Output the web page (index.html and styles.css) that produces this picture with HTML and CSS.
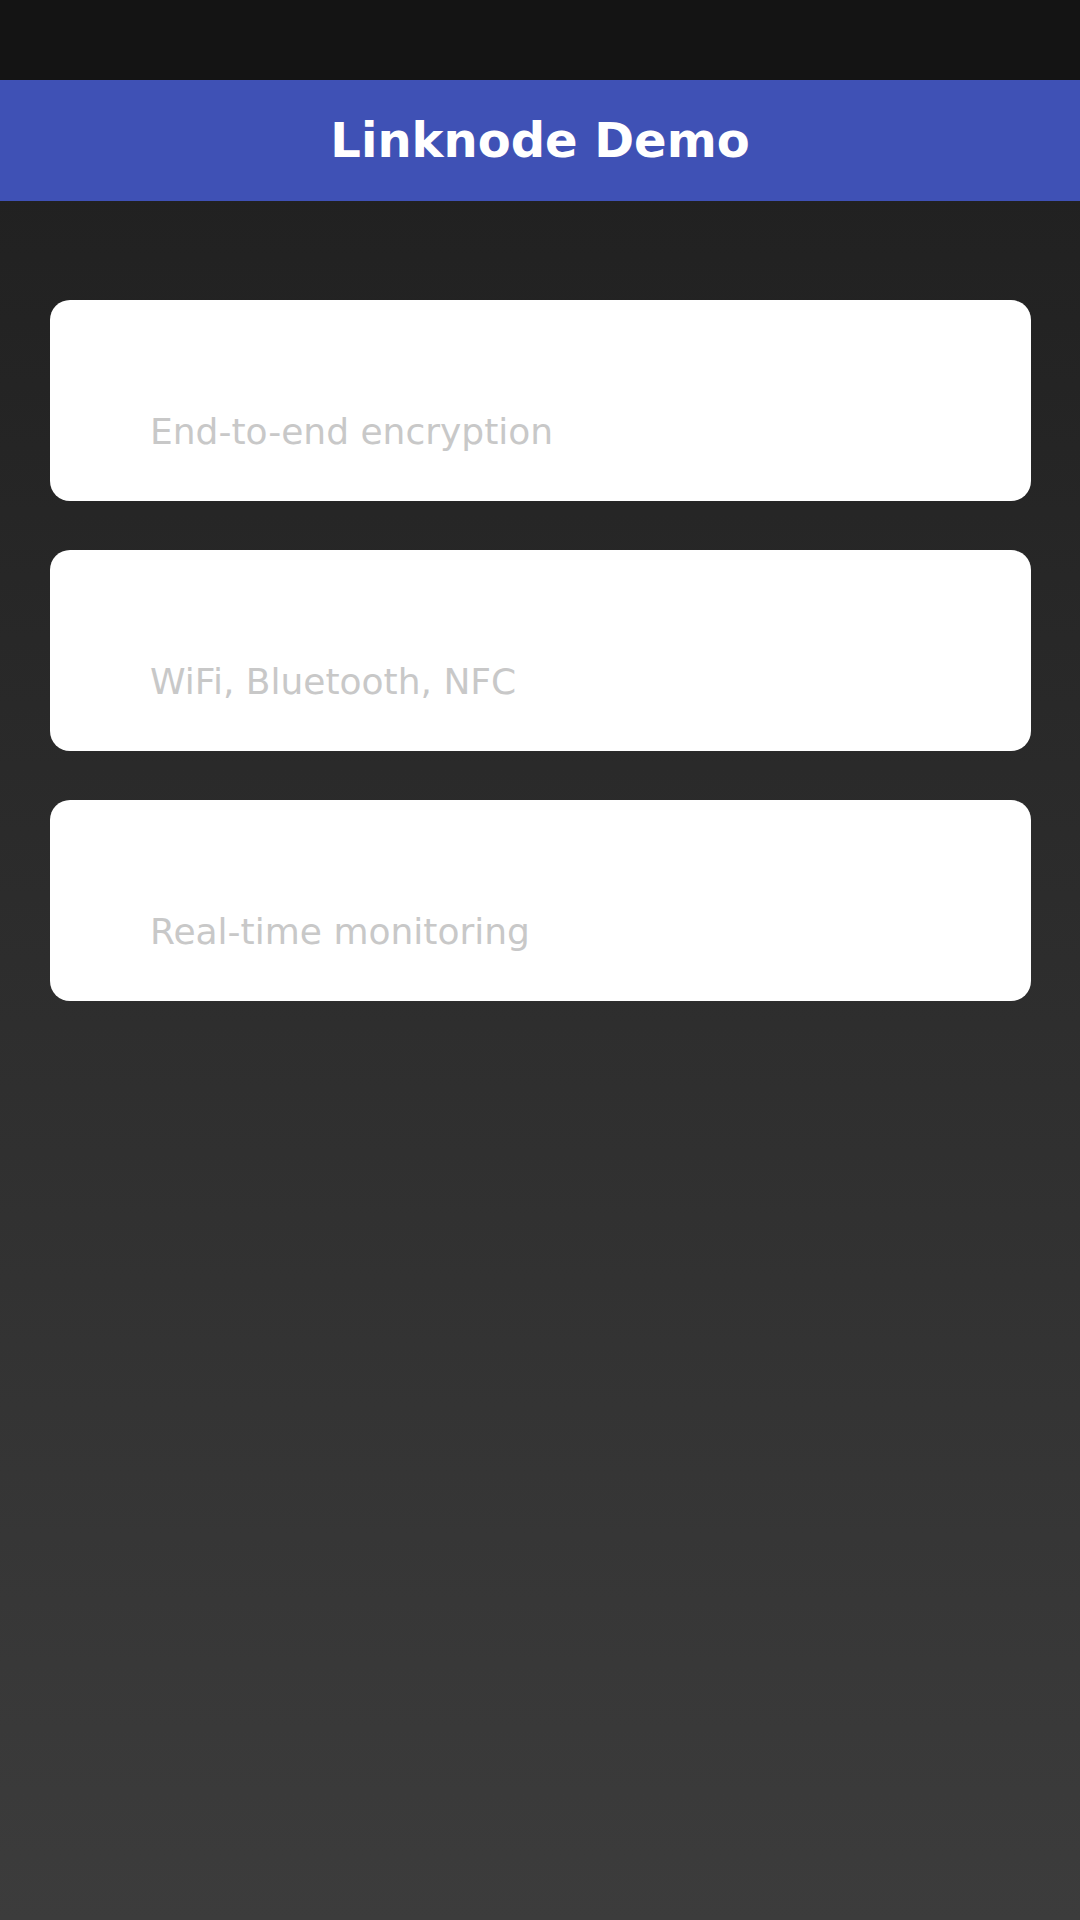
FILE: index.html
```html
<!DOCTYPE html>
<html lang="en">
<head>
<meta charset="utf-8">
<meta name="viewport" content="width=device-width, initial-scale=1">
<title>Linknode Demo</title>
<link rel="stylesheet" href="styles.css">
</head>
<body>
<div class="status-bar"></div>
<header class="app-bar"><h1 class="app-title">Linknode Demo</h1></header>
<main class="features">
<section class="card"><p class="card-text">End-to-end encryption</p></section>
<section class="card"><p class="card-text">WiFi, Bluetooth, NFC</p></section>
<section class="card"><p class="card-text">Real-time monitoring</p></section>
</main>
</body>
</html>
```
FILE: styles.css
```css
* { box-sizing: border-box; }
body {
  margin: 0;
  min-height: 100vh;
  background: linear-gradient(#1e1e1e, #3c3c3c);
  font-family: "DejaVu Sans", sans-serif;
}
.status-bar { height: 80px; background: #141414; }
.app-bar {
  padding: 32px 32px 33px;
  background: #3f51b5;
  color: #fff;
  text-align: center;
}
.app-title { margin: 0; font-size: 48px; line-height: 56px; }
.features {
  display: flex;
  flex-direction: column;
  gap: 49px;
  padding: 99px 49px 99px 50px;
}
.card {
  padding: 112px 100px 49px;
  border-radius: 20px;
  background: #fff;
}
.card-text { margin: 0; font-size: 36px; line-height: 40px; color: #c8c8c8; }
```
